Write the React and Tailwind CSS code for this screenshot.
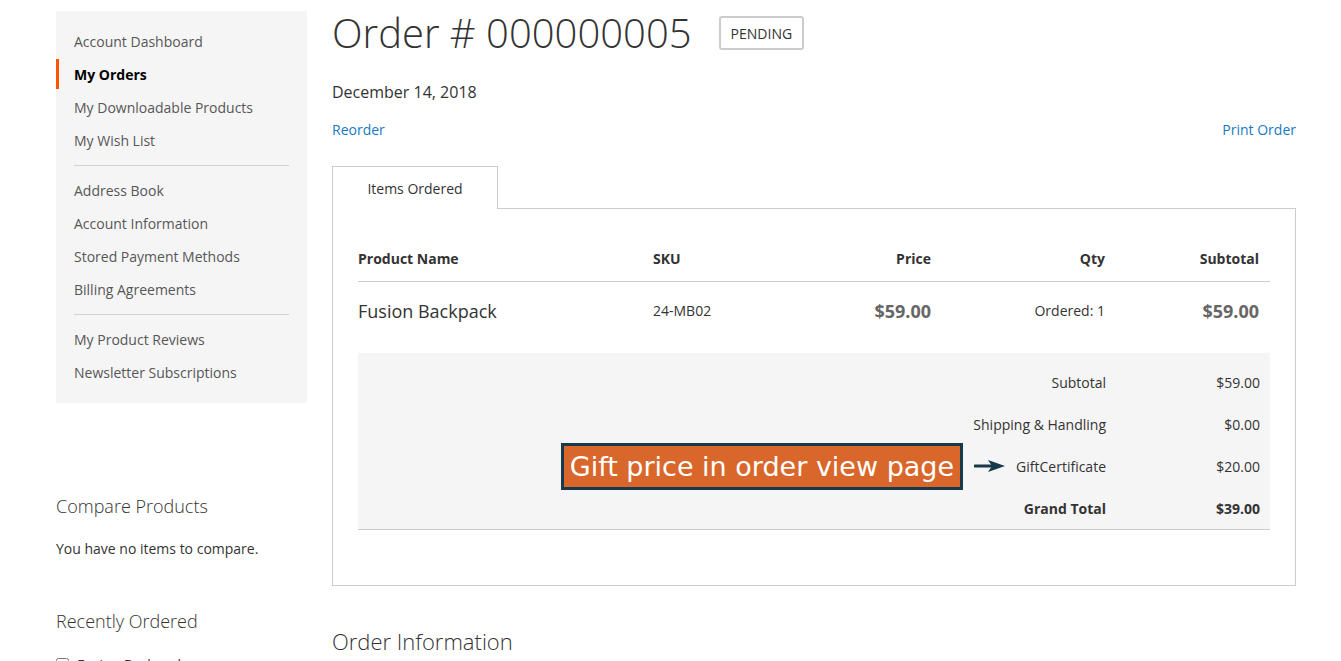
import React from 'react';

const navGroups = [
  ['Account Dashboard', 'My Orders', 'My Downloadable Products', 'My Wish List'],
  ['Address Book', 'Account Information', 'Stored Payment Methods', 'Billing Agreements'],
  ['My Product Reviews', 'Newsletter Subscriptions'],
];

const totals = [
  { label: 'Subtotal', value: '$59.00' },
  { label: 'Shipping & Handling', value: '$0.00' },
  { label: 'GiftCertificate', value: '$20.00', note: true },
  { label: 'Grand Total', value: '$39.00', strong: true },
];

const Sidebar = () => (
  <aside className="w-[251px] shrink-0">
    <nav className="mt-[11px] bg-[#f5f5f5] pt-[14px] pb-[14px]">
      {navGroups.map((group, gi) => (
        <div key={gi}>
          {gi > 0 && <div className="mx-[18px] my-2 h-px bg-[#d1d1d1]"></div>}
          {group.map((item) => {
            const active = item === 'My Orders';
            return (
              <div key={item} className="relative flex h-[33px] items-center pl-[18px] text-[14px]">
                {active && <span className="absolute left-0 top-[1px] h-[30px] w-[3px] bg-[#ff5501]"></span>}
                <span className={active ? 'font-bold text-[#000]' : 'text-[#575757]'}>{item}</span>
              </div>
            );
          })}
        </div>
      ))}
    </nav>

    <div className="mt-[90px]">
      <h3 className="text-[18px] font-light leading-[26px] text-[#333]">Compare Products</h3>
      <p className="mt-[20px] text-[14px] leading-[20px] text-[#333]">You have no items to compare.</p>
    </div>

    <div className="mt-[49px]">
      <h3 className="text-[18px] font-light leading-[26px] text-[#333]">Recently Ordered</h3>
      <label className="mt-[20px] flex items-center gap-2 text-[14px] text-[#333]">
        <input type="checkbox" className="h-[13px] w-[13px]" />
        Fusion Backpack
      </label>
    </div>
  </aside>
);

const GiftNote = () => (
  <div className="mr-[10px] flex items-center">
    <div className="flex h-[47px] items-center border-[3px] border-[#17394a] bg-[#d9672b] px-[6px]">
      <span className="text-[27px] leading-none text-white" style={{ fontFamily: '"DejaVu Sans", sans-serif' }}>
        Gift price in order view page
      </span>
    </div>
    <svg width="32" height="14" viewBox="0 0 32 14" className="ml-[11px]">
      <line x1="1" y1="7" x2="20" y2="7" stroke="#17394a" strokeWidth="3" strokeLinecap="round" />
      <path d="M14 1 L31 7 L14 13 L18 7 Z" fill="#17394a" />
    </svg>
  </div>
);

const OrderItems = () => (
  <div className="border border-[#ccc] px-[25px] pt-[25px] pb-[55px]">
    {/* header */}
    <div className="flex h-[48px] items-end border-b border-[#ccc] pb-[12px] text-[14px] font-bold leading-[20px] text-[#333]">
      <div className="w-[285px]">Product Name</div>
      <div className="w-[150px] pl-[10px]">SKU</div>
      <div className="w-[148px] pr-[10px] text-right">Price</div>
      <div className="w-[174px] pr-[10px] text-right">Qty</div>
      <div className="w-[154px] pr-[10px] text-right">Subtotal</div>
    </div>
    {/* item */}
    <div className="flex h-[71px] items-start pt-[16px] text-[#333]">
      <div className="w-[285px] text-[18px] leading-[26px]">Fusion Backpack</div>
      <div className="w-[150px] pl-[10px] pt-[3px] text-[14px] leading-[20px]">24-MB02</div>
      <div className="w-[148px] pr-[10px] text-right text-[18px] font-bold leading-[26px] text-[#666]">$59.00</div>
      <div className="w-[174px] pr-[10px] pt-[3px] text-right text-[14px] leading-[20px]">Ordered: 1</div>
      <div className="w-[154px] pr-[10px] text-right text-[18px] font-bold leading-[26px] text-[#666]">$59.00</div>
    </div>
    {/* totals */}
    <div className="border-b border-[#ccc] bg-[#f5f5f5] pt-[8px]">
      {totals.map((t) => (
        <div key={t.label} className="flex h-[42px] items-center justify-end text-[14px] text-[#333]">
          {t.note && <GiftNote />}
          <div className={`pr-[10px] text-right ${t.strong ? 'font-bold' : ''}`}>{t.label}</div>
          <div className={`w-[154px] pr-[10px] text-right ${t.strong ? 'font-bold' : ''}`}>{t.value}</div>
        </div>
      ))}
    </div>
  </div>
);

const App = () => {
  return (
    <div
      className="h-[661px] overflow-hidden bg-white pl-[56px] pr-[45px] text-[#333]"
      style={{ fontFamily: '"Open Sans", "Liberation Sans", sans-serif' }}
    >
      <div className="flex gap-[25px]">
        <Sidebar />

        <main className="flex-1">
          <div className="flex items-center pt-[11px]">
            <h1 className="text-[40px] font-light leading-[44px] text-[#333]">Order # 000000005</h1>
            <span className="ml-[27px] flex h-[34px] items-center rounded-[3px] border-2 border-[#ccc] px-[10px] text-[14px] text-[#333]">
              PENDING
            </span>
          </div>

          <div className="mt-[25px] text-[16px] leading-[24px] text-[#333]">December 14, 2018</div>

          <div className="mt-[16px] flex justify-between text-[14px] leading-[20px]">
            <a href="#" className="text-[#1979c3]">Reorder</a>
            <a href="#" className="text-[#1979c3]">Print Order</a>
          </div>

          <div className="mt-[26px]">
            <div className="relative z-10 -mb-px flex h-[43px] w-[166px] items-center justify-center border border-b-0 border-[#ccc] bg-white text-[14px] text-[#333]">
              Items Ordered
            </div>
            <OrderItems />
          </div>

          <h2 className="mt-[41px] text-[22px] font-light leading-[28px] text-[#333]">Order Information</h2>
        </main>
      </div>
    </div>
  );
};

export default App;
